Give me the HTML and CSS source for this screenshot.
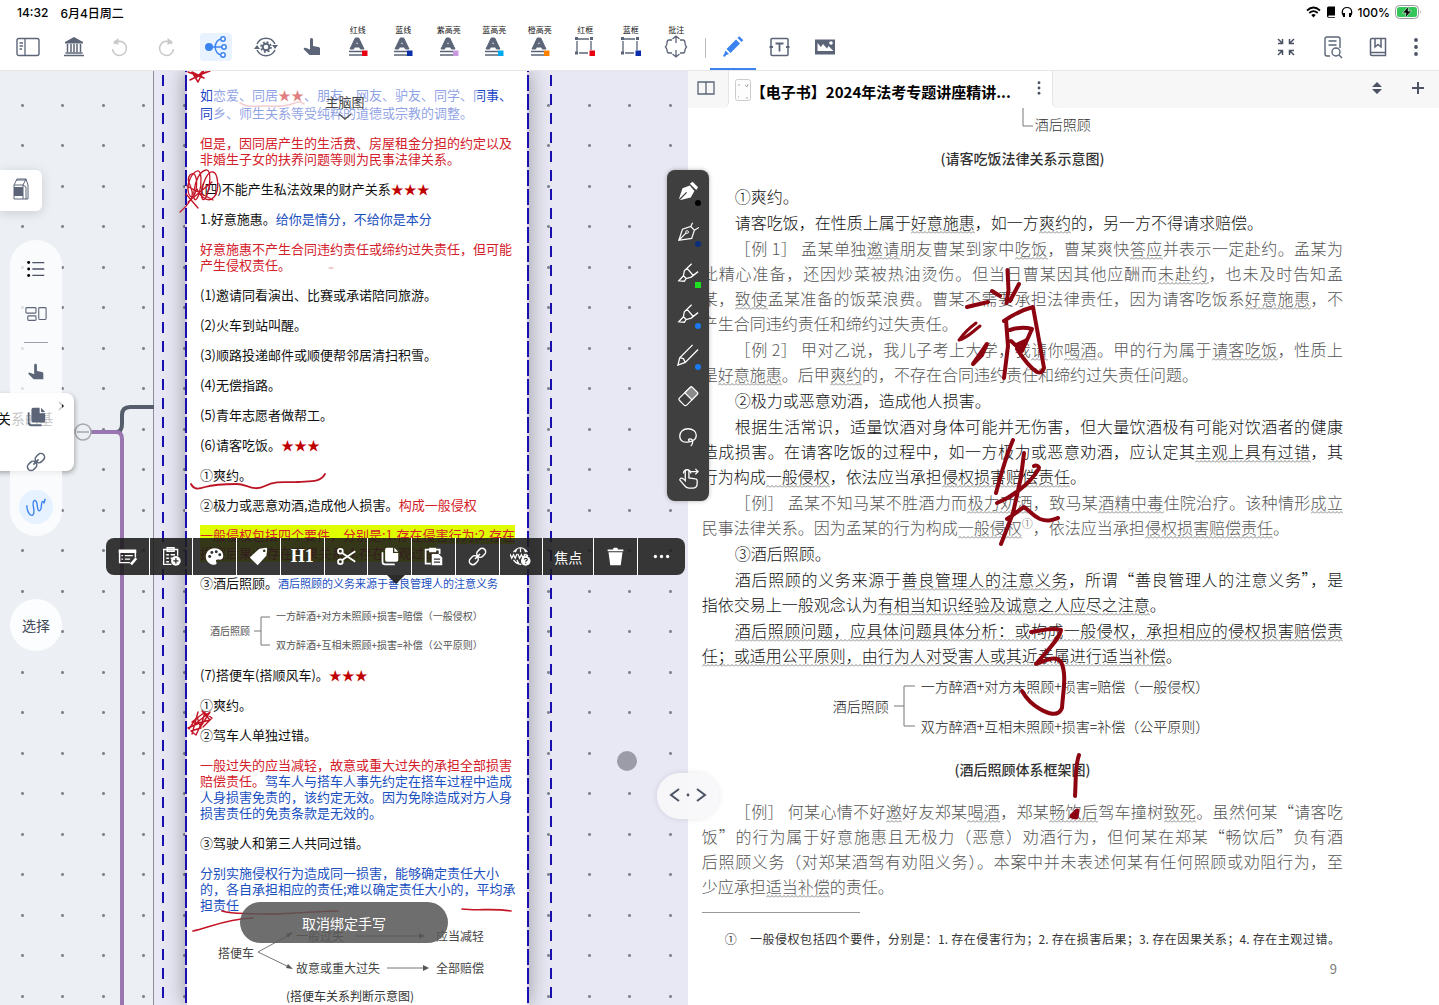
FILE: index.html
```html
<!DOCTYPE html>
<html lang="zh-CN">
  <head>
    <meta charset="UTF-8" />
    <meta name="viewport" content="width=device-width, initial-scale=1.0" />
    <title>法考专题讲座精讲</title>
    <link rel="stylesheet" href="styles.css">
  </head>
  <body>
    <!-- Shared icons -->
    <svg class="sprite" aria-hidden="true">
      <symbol id="i-mark" viewBox="0 0 24 24">
        <path d="M4 14L9.300 3h3.400L18 14h-3.600l-.8-2H8.400l-.8 2zM9.500 9.300h3L11 5.800z" fill="#5b6577" fill-rule="evenodd" stroke="#5b6577" stroke-linejoin="round" />
        <path d="M3 16.500h13M3 20h13" stroke="#5b6577" stroke-width="1.500" />
        <path d="M16 15.500h5.500V21H16z" fill="currentColor" />
      </symbol>
      <symbol id="i-frame" viewBox="0 0 24 24">
        <path d="M5 4h11M4 6v11M18 6v9M6 18h9" stroke="#5b6577" stroke-width="1.300" fill="none" />
        <path d="M2 2h3v3H2zM17 2h3v3h-3zM2 16.500h3v3H2z" fill="#5b6577" />
        <path d="M16.500 15.500H22V21h-5.500z" fill="currentColor" />
      </symbol>
      <symbol id="i-hand" viewBox="0 0 24 24">
        <path d="M10 4.500a1.500 1.500 0 0 1 3 0V11l5.500 1c1 .2 1.500 1 1.500 2v6H9.500L4 14.500c-.8-1 .2-2.300 1.500-1.700L10 14.500z" fill="#5b6577" />
      </symbol>
      <symbol id="i-link" viewBox="0 0 24 24">
        <g transform="rotate(-45 12 12)" fill="none" stroke="currentColor" stroke-width="1.700">
          <rect x="0.500" y="8" width="11" height="8" rx="4" />
          <rect x="12.500" y="8" width="11" height="8" rx="4" />
          <path d="M8 12h8" />
        </g>
      </symbol>
      <symbol id="i-copy" viewBox="0 0 24 24">
        <path d="M9 2h7v6h6v8a2 2 0 0 1-2 2H9a2 2 0 0 1-2-2V4a2 2 0 0 1 2-2zM17.500 2L22 6.500h-4.500z" fill="currentColor" />
        <path d="M4 7v11a3 3 0 0 0 3 3h11" stroke="currentColor" stroke-width="2" fill="none" />
      </symbol>
      <symbol id="i-marker" viewBox="0 0 24 24">
        <path d="M16 2L8 9.500l-1 5.500 3 3 5.500-1.500 7.500-6M11 7l7 8M7 15l-5 5.500 6 .5 2-3" fill="none" stroke="#fff" stroke-width="1.400" />
      </symbol>
      <symbol id="i-dots" viewBox="0 0 24 24">
        <circle cx="12" cy="5" r="1.900" /><circle cx="12" cy="12" r="1.900" /><circle cx="12" cy="19" r="1.900" />
      </symbol>
    </svg>

    <header>
      <div class="status">
        <span>14:32</span>
        <span>6月4日周二</span>
        <span class="battery">
          <svg width="15" height="12" viewBox="0 0 15 12"><path d="M1 4.500q6.500-6 13 0M3.300 7q4.200-3.800 8.400 0" fill="none" stroke="#000" stroke-width="1.800" /><path d="M5.300 9q2.200-2 4.400 0L7.500 11.400z" /></svg>
          <svg width="10" height="12" viewBox="0 0 10 12"><path d="M1 2q0-1.500 1.500-1.500H9v9H3q-.8 0-.8.800t.8.700h6v.8H2.500Q1 11.800 1 10z" /></svg>
          <svg width="12" height="12" viewBox="0 0 12 12"><path d="M3.500 10.500C0 8 .5 1.500 6 1.500s6 6.500 2.500 9" fill="none" stroke="#000" stroke-width="1.200" /><path d="M2 7h2v4H2zM8 7h2v4H8z" /></svg>
          <span>100%</span>
          <svg width="27" height="14" viewBox="0 0 27 14"><rect x=".5" y=".5" width="23" height="13" rx="4" fill="#fff" stroke="#999" /><rect x="2" y="2" width="20" height="10" rx="2.500" fill="#33c759" /><path d="M25 5q1.500 2 0 4z" fill="#999" /><path d="M14 1L7.500 8H11l-1 5 6.500-7H13z" stroke="#fff" stroke-width=".6" /></svg>
        </span>
      </div>

      <nav>
        <button class="tool" aria-label="侧栏"><svg viewBox="0 0 24 24"><rect x="1" y="3.500" width="22" height="17" rx="2" fill="none" stroke="#5b6577" stroke-width="1.400" /><path d="M9 3.500v17M3.500 8H7M3.500 11H7M3.500 14H6" stroke="#5b6577" stroke-width="1.300" /></svg></button>
        <button class="tool" aria-label="文献库"><svg viewBox="0 0 24 24"><path d="M12 2l9 5v1.500H3V7z" fill="#5b6577" /><path d="M5.500 9v8M9 9v8M12 9v8M15 9v8M18.500 9v8M3.500 18h17M2 20.500h20" stroke="#5b6577" stroke-width="1.500" /></svg></button>
        <button class="tool" aria-label="撤销"><svg viewBox="0 0 24 24"><path d="M6 9a7 7 0 1 1-1.500 5M9 6.500h4" fill="none" stroke="#c9c9c9" stroke-width="1.500" /><path d="M10.500 3v7L5 7z" fill="#c9c9c9" /></svg></button>
        <button class="tool" aria-label="重做"><svg viewBox="0 0 24 24"><path d="M18 9a7 7 0 1 0 1.500 5M15 6.500h-4" fill="none" stroke="#c9c9c9" stroke-width="1.500" /><path d="M13.500 3v7L19 7z" fill="#c9c9c9" /></svg></button>
        <button class="tool mind" aria-label="脑图"><svg viewBox="0 0 24 24"><circle cx="5" cy="12" r="4" fill="#3b84f0" /><path d="M8 12h10M17 4q-5 1-6 8 1 7 6 8" fill="none" stroke="#3b84f0" stroke-width="1.500" /><g fill="#fff" stroke="#3b84f0" stroke-width="1.500"><circle cx="19" cy="4" r="2.200" /><circle cx="20" cy="12" r="2.200" /><circle cx="19" cy="20" r="2.200" /></g></svg></button>
        <button class="tool" aria-label="复习"><svg viewBox="0 0 24 24"><path d="M3 9a10 10 0 0 1 18 0M3 15a10 10 0 0 0 18 0" fill="none" stroke="#5b6577" stroke-width="1.500" /><path d="M0 14l3-4 3 4zM18 10h6l-3 4z" fill="#5b6577" /><circle cx="12" cy="12" r="3.300" fill="none" stroke="#5b6577" stroke-width="2" /><circle cx="12" cy="12" r="5" fill="none" stroke="#5b6577" stroke-width="1.600" stroke-dasharray="2 1.930" /></svg></button>
        <button class="tool" aria-label="手势"><svg viewBox="0 0 24 24"><use href="#i-hand" /></svg></button>
        <div class="quick">
          <button class="tool red"><span>红线</span><svg viewBox="0 0 24 24"><use href="#i-mark" /></svg></button>
          <button class="tool navy"><span>蓝线</span><svg viewBox="0 0 24 24"><use href="#i-mark" /></svg></button>
          <button class="tool purple"><span>紫高亮</span><svg viewBox="0 0 24 24"><use href="#i-mark" /></svg></button>
          <button class="tool sky"><span>蓝高亮</span><svg viewBox="0 0 24 24"><use href="#i-mark" /></svg></button>
          <button class="tool orange"><span>橙高亮</span><svg viewBox="0 0 24 24"><use href="#i-mark" /></svg></button>
          <button class="tool red"><span>红框</span><svg viewBox="0 0 24 24"><use href="#i-frame" /></svg></button>
          <button class="tool navy"><span>蓝框</span><svg viewBox="0 0 24 24"><use href="#i-frame" /></svg></button>
          <button class="tool"><span>批注</span><svg viewBox="0 0 24 24"><path d="M8 5H5q-2 0-2 3 0 2-1.500 4Q3 14 3 15q0 3 2 3h3M16 5h3q2 0 2 3 0 2 1.500 4-1.500 2-1.500 3 0 3-2 3h-3M12 8V1M8.500 4L12 1l3.500 3M12 15v7M8.500 19l3.500 3 3.500-3" fill="none" stroke="#5b6577" stroke-width="1.300" /></svg></button>
        </div>
        <div class="divider"></div>
        <button class="tool current" aria-label="画笔"><svg viewBox="0 0 24 24"><path d="M5.500 15L15 5.500l4 4L9.500 19zM16.500 4l1.800-1.800 4 4L20.500 8zM4.500 16.500l3.500 3.500-4 1.500-1-1z" fill="#3b84f0" /><circle cx="3.500" cy="21.500" r="1.200" fill="#3b84f0" /></svg></button>
        <button class="tool" aria-label="文本框"><svg viewBox="0 0 24 24"><rect x="4" y="3.500" width="17" height="17" rx="1" fill="none" stroke="#5b6577" stroke-width="1.500" /><path d="M8.500 8.500h8M12.500 8.500v8M2.500 12H6M19 12h3.500" stroke="#5b6577" stroke-width="1.800" /></svg></button>
        <button class="tool" aria-label="图片"><svg viewBox="0 0 24 24"><path d="M2 4.500h20v15H2z" fill="#5b6577" /><path d="M4.500 16V8L8 12l2-3 4 4.500 1.500-2.500 5 5z" fill="#fff" /><circle cx="18" cy="8" r="1.800" fill="#fff" /></svg></button>
        <div class="nav-end">
          <button class="tool" aria-label="退出全屏"><svg viewBox="0 0 24 24"><path d="M4 4l4 4M20 4l-4 4M4 20l4-4M20 20l-4-4M8.500 4v4.500H4M15.500 4v4.500H20M8.500 20v-4.500H4M15.500 20v-4.500H20" fill="none" stroke="#4a5264" stroke-width="1.500" /></svg></button>
          <button class="tool" aria-label="查找"><svg viewBox="0 0 24 24"><path d="M10 21H7q-2 0-2-2V4q0-2 2-2h11q2 0 2 2v9M8.500 6h8M8.500 10h8" fill="none" stroke="#5b6577" stroke-width="1.400" /><circle cx="16" cy="17" r="4" fill="none" stroke="#5b6577" stroke-width="1.400" /><path d="M19 20l3 3" stroke="#5b6577" stroke-width="1.400" /></svg></button>
          <button class="tool" aria-label="书签"><svg viewBox="0 0 24 24"><path d="M6 3.500h13.500v17H6q-1.500 0-1.500-1.500V5q0-1.500 1.500-1.500zM4.500 17.500h15M9 4v8l3-2.500 3 2.500V4" fill="none" stroke="#5b6577" stroke-width="1.500" /></svg></button>
          <button class="tool narrow" aria-label="更多"><svg viewBox="0 0 24 24" fill="#4a5264"><use href="#i-dots" /></svg></button>
        </div>
      </nav>
    </header>

    <main>
      <!-- Mind map canvas -->
      <section class="canvas">
        <div class="dots"></div>
        <svg class="branches" viewBox="0 71 160 934" fill="none" stroke-width="4">
          <path d="M90 432h26q6 0 6-8v-9q0-8 8-8h24" stroke="#555d6b" />
          <path d="M90 432h26q6 0 6 7v580" stroke="#9a76b0" />
          <circle cx="83" cy="432" r="8" fill="#eceff3" stroke="#a5a8ad" stroke-width="1.500" />
          <path d="M77 432h12" stroke="#a5a8ad" stroke-width="1.500" />
        </svg>
        <article class="node">关系的基<svg width="8" height="10" viewBox="0 0 8 10"><path d="M2 1l4 4-4 4" fill="none" stroke="#222" stroke-width="1.500" /></svg></article>

        <div class="card">
          <div class="frame">
            <article class="sheet">
              <p class="blue">如恋爱、同居<i>★★</i>、朋友、网友、驴友、同学、同事、<br>同乡、师生关系等受纯粹的道德或宗教的调整。</p>
              <p class="hand red-ink">但是，因同居产生的生活费、房屋租金分担的约定以及<br>非婚生子女的扶养问题等则为民事法律关系。</p>
              <p>(四)不能产生私法效果的财产关系<i>★★★</i></p>
              <p>1.好意施惠。<span class="blue-ink">给你是情分，不给你是本分</span></p>
              <p class="hand red-ink">好意施惠不产生合同违约责任或缔约过失责任，但可能<br>产生侵权责任。</p>
              <p>(1)邀请同看演出、比赛或承诺陪同旅游。</p>
              <p>(2)火车到站叫醒。</p>
              <p>(3)顺路投递邮件或顺便帮邻居清扫积雪。</p>
              <p>(4)无偿指路。</p>
              <p>(5)青年志愿者做帮工。</p>
              <p>(6)请客吃饭。<i>★★★</i></p>
              <p>①爽约。</p>
              <p>②极力或恶意劝酒,造成他人损害。<span class="red-ink">构成一般侵权</span></p>
              <p class="red-ink"><mark>一般侵权包括四个要件，分别是:1.存在侵害行为;2.存在</mark><br><mark>损害后果;3.存在因果关系;4.存在主观过错</mark></p>
              <p>③酒后照顾。<span class="blue-ink small">酒后照顾的义务来源于善良管理人的注意义务</span></p>
              <div class="tree">
                <span>酒后照顾</span>
                <svg width="18" height="32" viewBox="0 0 18 32"><path d="M0 16h7M16 2H7v28h9" fill="none" stroke="#777" /></svg>
                <div><span>一方醉酒+对方未照顾+损害=赔偿（一般侵权）</span><span>双方醉酒+互相未照顾+损害=补偿（公平原则）</span></div>
              </div>
              <p>(7)搭便车(搭顺风车)。<i>★★★</i></p>
              <p>①爽约。</p>
              <p>②驾车人单独过错。</p>
              <p class="hand blue-ink"><span class="red-ink">一般过失的应当减轻，故意或重大过失的承担全部损害<br>赔偿责任。</span>驾车人与搭车人事先约定在搭车过程中造成<br>人身损害免责的，该约定无效。因为免除造成对方人身<br>损害责任的免责条款是无效的。</p>
              <p>③驾驶人和第三人共同过错。</p>
              <p class="hand blue-ink">分别实施侵权行为造成同一损害，能够确定责任大小<br>的，各自承担相应的责任;难以确定责任大小的，平均承<br>担责任</p>
              <div class="flow">
                <span>搭便车</span>
                <svg width="36" height="44" viewBox="0 0 36 44"><path d="M34 4L1 22l33 16" fill="none" stroke="#777" /><path d="M36 2l-7 2 2 4zM36 39l-5-5-2 4z" fill="#555" /></svg>
                <div>
                  <p><span>一般过失</span><svg viewBox="0 0 70 6" width="70" height="6"><path d="M0 3h66" stroke="#777" /><path d="M64 0l6 3-6 3z" fill="#555" /></svg><span>应当减轻</span></p>
                  <p><span>故意或重大过失</span><svg viewBox="0 0 42 6" width="42" height="6"><path d="M0 3h38" stroke="#777" /><path d="M36 0l6 3-6 3z" fill="#555" /></svg><span>全部赔偿</span></p>
                </div>
              </div>
              <p class="figure">(搭便车关系判断示意图)</p>
            </article>
          </div>
        </div>

        <!-- Pen strokes on the sheet -->
        <svg class="ink" viewBox="0 71 688 934" fill="none" stroke="#c41425" stroke-linecap="round" stroke-linejoin="round">
          <path d="M188 72l16 6-12-6 6 10 6-12-8 8M190 80l16-8M202 74l8-3" stroke-width="1.500" />
          <path d="M240 103c8 5 14 3 22 3s18 1 26-1 12-5 16-1" stroke="#e39aa2" stroke-width="1.500" />
          <path d="M180 212c8-7 14-14 12-21-2-8-6-11-2-16 5-5 8 4 6 15-2 10-7 8-8 0s4-17 9-19 5 14 2 23-6 7-5-3 6-20 12-21 4 17 1 25-7 5-5-5 6-19 11-18 7 18 1 25-14-1-17-8M186 194l12 14M187 186l26 14M188 202l24-20" stroke-width="1.300" />
          <path d="M191 484c3 6 8 5 14 3 10-3 22-3 32-3s16 8 28 2 22-3 33-4 22 1 27-8" stroke="#bc1626" stroke-width="1.800" />
          <path d="M329 268h4" stroke="#e39aa2" stroke-width="1" />
          <path d="M189 729l8-12 4 11-10 3 5 4 6-13-14 6M192 722l13-10-4 14 9-14-15 12 15-4-8-9 10 7-9 9M192 734l6-22" stroke-width="1.400" />
          <path d="M462 909c16 2 32-1 49 2M193 931c15-3 32-12 60-13M222 911c10 3 20 2 38 3s40-2 78-3" stroke-width="1.600" />
        </svg>

        <div class="map-title">主脑图<svg width="14" height="8" viewBox="0 0 14 8"><path d="M1 1l6 5 6-5" fill="none" stroke="#555" stroke-width="1.500" /></svg></div>

        <button class="box" aria-label="卡片盒"><svg width="20" height="24" viewBox="0 0 20 24"><path d="M3 8l3-6h9l2 6v14H3zM3 8h9v14M12 8l3-6M12 8l3 2v12M5 3h10" fill="none" stroke="#5b6577" /><path d="M3 10h9v9H3z" fill="#5b6577" /></svg></button>
        <div class="pill">
          <button aria-label="大纲"><svg viewBox="0 0 24 24"><path d="M8 5h13M8 12h13M8 19h13" stroke="#4a5264" stroke-width="1.500" /><circle cx="4" cy="5" r="1.600" /><circle cx="4" cy="12" r="1.600" /><circle cx="4" cy="19" r="1.600" /></svg></button>
          <button aria-label="布局"><svg viewBox="0 0 24 24"><g fill="none" stroke="#5b6577" stroke-width="1.200"><rect x="1" y="5" width="11" height="6" rx="1" /><rect x="3" y="14" width="9" height="5" rx="1" /><rect x="15" y="5" width="8" height="13" rx="1" /></g></svg></button>
          <hr>
          <button aria-label="手势"><svg viewBox="0 0 24 24"><use href="#i-hand" /></svg></button>
          <button aria-label="复制"><svg viewBox="0 0 24 24"><use href="#i-copy" /></svg></button>
          <button aria-label="链接"><svg viewBox="0 0 24 24"><use href="#i-link" /></svg></button>
          <button class="on" aria-label="手写"><svg viewBox="0 0 24 24"><path d="M2 10c0 6 3 12 6 11 5-2-2-14 2-16 5-1 2 12 6 11 3-1 1-9 3-10s1 3 2 1l1-4" fill="none" stroke="#3b84f0" stroke-width="1.500" /></svg></button>
        </div>
        <button class="select">选择</button>

        <div class="context">
          <button aria-label="编辑"><svg viewBox="0 0 24 24"><path d="M2 4h20v4H2z" fill="#fff" /><path d="M15 19H3V6h18v7M5 11h2M5 15h2M9 11h9M9 15h6" fill="none" stroke="#fff" stroke-width="1.700" /><path d="M16 21l6-7" stroke="#fff" stroke-width="3" /></svg></button>
          <button aria-label="加入复习"><svg viewBox="0 0 24 24"><path d="M12 21H3V4h16v7M7 2h8v4H7zM6 10h3M11 10h5M6 14h3M6 18h3M11 14h2" fill="none" stroke="#fff" stroke-width="1.500" /><circle cx="17" cy="17" r="5.500" fill="#fff" /><path d="M17 14v6M14 17h6" stroke="#333" stroke-width="1.500" /></svg></button>
          <button aria-label="颜色"><svg viewBox="0 0 24 24"><path d="M12 2.500c6 0 10 4 10 8.500 0 4-3 5-5 4.500-2.500-.5-4 .5-3 2.500s0 3.500-2 3.500C6 21.500 2 17 2 12s4-9.500 10-9.500z" fill="#fff" /><g fill="#333"><circle cx="6.500" cy="12" r="1.700" /><circle cx="9" cy="7.500" r="1.700" /><circle cx="14" cy="6.500" r="1.700" /><circle cx="18" cy="10" r="1.700" /></g></svg></button>
          <button aria-label="标签"><svg viewBox="0 0 24 24"><path d="M13 3l8-1 1 1-1 8-10 11-9-9zM18.500 4a1.500 1.500 0 1 0 .1 0z" fill="#fff" fill-rule="evenodd" /></svg></button>
          <button class="h1">H1</button>
          <button aria-label="剪切"><svg viewBox="0 0 24 24"><g fill="none" stroke="#fff" stroke-width="2"><circle cx="5" cy="6" r="2.700" /><circle cx="5" cy="18" r="2.700" /><path d="M7 8l15 10M7 16L22 6" /></g></svg></button>
          <button aria-label="复制"><svg viewBox="0 0 24 24"><use href="#i-copy" /></svg></button>
          <button aria-label="粘贴"><svg viewBox="0 0 24 24"><path d="M9 20H3V4h16v5" fill="none" stroke="#fff" stroke-width="2" /><path d="M7 2h8v5H7zM10 9h8l4 4v9H10z" fill="#fff" /><path d="M12.500 15h7M12.500 18.500h7" stroke="#333" stroke-width="1.300" /></svg></button>
          <button aria-label="链接"><svg viewBox="0 0 24 24"><use href="#i-link" /></svg></button>
          <button aria-label="搜索网页"><svg viewBox="0 0 24 24"><path d="M4 7q8-10 16 0M4 16q4 5 9 5M12 2v5M8 3L6 7M16 3l2 4M8 16l2 4" fill="none" stroke="#fff" stroke-width="1.400" /><path d="M0 9l2 5 2-4 2 4 2-5M9 9l2 5 2-4 2 4 2-5M18 9l1 3 1.500-2" fill="none" stroke="#fff" stroke-width="1.500" /><circle cx="18" cy="17" r="5.500" fill="#fff" /><path d="M16.300 15.500c.2-2 3.600-1.800 3.400 0-.1 1-1.700 1.200-1.700 2.500M18 19.200v1.200" fill="none" stroke="#333" stroke-width="1.300" /></svg></button>
          <button class="focus">焦点</button>
          <button aria-label="删除"><svg viewBox="0 0 24 24"><path d="M3 4h6l1-2h4l1 2h6v2H3zM4 7h16l-2 15H6z" fill="#fff" /></svg></button>
          <button aria-label="更多"><svg class="flat" viewBox="0 0 24 24" fill="#fff"><use href="#i-dots" /></svg></button>
        </div>

        <div class="touch"></div>
        <button class="toast">取消绑定手写</button>
      </section>

      <!-- Book -->
      <section class="book">
        <div class="tabs">
          <button class="split" aria-label="分栏"><svg width="18" height="16" viewBox="0 0 18 16"><path d="M1 2h16v12H1zM9 2v12" fill="none" stroke="#5b6577" stroke-width="1.300" /></svg></button>
          <div class="tab">
            <svg width="16" height="22" viewBox="0 0 16 22"><rect x=".5" y=".5" width="15" height="21" rx="2" fill="#fdfdfd" stroke="#ccc" /><path d="M3 6h2M10 6l2 2 1-3M3 18h1M11 19h2" stroke="#aaa" fill="none" /></svg>
            <h1>【电子书】2024年法考专题讲座精讲...</h1>
            <button aria-label="标签菜单"><svg width="18" height="18" viewBox="0 0 24 24" fill="#4a5264"><use href="#i-dots" /></svg></button>
          </div>
          <div class="tabs-rest">
            <button aria-label="切换"><svg width="12" height="14" viewBox="0 0 12 14"><path d="M1 6l5-5 5 5zM1 8h10l-5 5z" fill="#4a5264" /></svg></button>
            <button aria-label="新建"><svg width="14" height="14" viewBox="0 0 14 14"><path d="M7 1v12M1 7h12" stroke="#4a5264" stroke-width="2" /></svg></button>
          </div>
        </div>

        <article class="page">
          <div class="branch-end"><svg width="12" height="22" viewBox="0 0 12 22"><path d="M1 0v18h10" fill="none" stroke="#777" /></svg>酒后照顾</div>
          <p class="caption">(请客吃饭法律关系示意图)</p>

          <div class="text">
            <p><span class="first end">①爽约。</span></p>
            <p><span class="first end">请客吃饭，在性质上属于<u>好意施惠</u>，如一方<u>爽约</u>的，另一方不得请求赔偿。</span></p>
            <p class="case"><span class="first">［例 1］ 孟某单独<u>邀请</u>朋友曹某到家中<u>吃饭</u>，曹某爽快<u>答应</u>并表示一定赴约。孟某为</span><span>此精心准备，还因炒菜被热油烫伤。但当日曹某因其他应酬而<u>未赴约</u>，也未及时告知孟</span><span>某，<u>致使</u>孟某准备的饭菜浪费。曹某不需要承担法律责任，因为请客吃饭系<u>好意施惠</u>，不</span><span class="end">产生合同违约责任和缔约过失责任。</span></p>
            <p class="case"><span class="first">［例 2］ 甲对乙说，我儿子考上大学，我<u>请</u>你<u>喝酒</u>。甲的行为属于<u>请客吃饭</u>，性质上</span><span class="end">是<u>好意施惠</u>。后甲<u>爽约</u>的，不存在合同违约责任和缔约过失责任问题。</span></p>
            <p><span class="first end">②极力或恶意劝酒，造成他人损害。</span></p>
            <p><span class="first">根据生活常识，适量饮酒对身体可能并无伤害，但大量饮酒极有可能对饮酒者的健康</span><span>造成损害。在请客吃饭的过程中，如一方极力或恶意劝酒，应认定其<u>主观上具有过错</u>，其</span><span class="end">行为构成<u>一般侵权</u>，依法应当承担<u>侵权损害赔偿责任</u>。</span></p>
            <p class="case"><span class="first">［例］ 孟某不知马某不胜酒力而<u>极力劝酒</u>，致马某<u>酒精中毒</u>住院治疗。该种情形<u>成立</u></span><span class="end">民事法律关系。因为孟某的行为构成<u>一般侵权</u><sup>①</sup>，依法应当承担<u>侵权损害赔偿责任</u>。</span></p>
            <p><span class="first end">③酒后照顾。</span></p>
            <p><span class="first">酒后照顾的义务来源于<u>善良管理人的注意义务</u>，所谓“善良管理人的注意义务”，是</span><span class="end">指依交易上一般观念认为<u>有相当知识经验及诚意之人应尽之注意</u>。</span></p>
            <p><span class="first"><u>酒后照顾问题，应具体问题具体分析：或构成一般侵权，承担相应的侵权损害赔偿责</u></span><span class="end"><u>任；或适用公平原则，由行为人对受害人或其近亲属进行适当补偿</u>。</span></p>
          </div>

          <div class="tree big">
            <span>酒后照顾</span>
            <svg width="22" height="44" viewBox="0 0 22 44"><path d="M0 22h10M21 2H10v40h11" fill="none" stroke="#777" /></svg>
            <div><span>一方醉酒+对方未照顾+损害=赔偿（一般侵权）</span><span>双方醉酒+互相未照顾+损害=补偿（公平原则）</span></div>
          </div>
          <p class="caption">(酒后照顾体系框架图)</p>

          <div class="text last">
            <p class="case"><span class="first">［例］ 何某心情不好<u>邀</u>好友郑某<u>喝酒</u>，郑某<u>畅饮后</u>驾车撞树<u>致死</u>。虽然何某“请客吃</span><span>饭”的行为属于好意施惠且无极力（恶意）劝酒行为，但何某在郑某“畅饮后”负有酒</span><span>后照顾义务（对郑某酒驾有劝阻义务）。本案中并未表述何某有任何照顾或劝阻行为，至</span><span class="end">少应承担<u>适当补偿</u>的责任。</span></p>
          </div>
          <footer>
            <p>①　一般侵权包括四个要件，分别是：1. 存在侵害行为；2. 存在损害后果；3. 存在因果关系；4. 存在主观过错。</p>
            <span>9</span>
          </footer>
        </article>

        <!-- Pen strokes on the book page -->
        <svg class="ink" viewBox="688 71 751 934" fill="none" stroke="#8c0410" stroke-width="4" stroke-linecap="round" stroke-linejoin="round">
          <path d="M967 307l21-5M992 291l8 5M1007.500 270l1 20-2 13M1019 284l-9 17" />
          <path d="M976 323c-8 6-12 10-17 17 8-2 12-7 21-14" stroke-width="3" />
          <path d="M987 344l-14 20 9-9z" />
          <path d="M1004 321q14-10 29-14l4 22 7 39q-2 6-7 4-9-6-20-23M1006 320l2 26-4 32M1010 330q12-4 22-1l-10 22-11-10" />
          <path d="M1027 339l-6 11-7-5z" fill="#8c0410" stroke-width="2" />
          <path d="M1013 440c-6 14-12 34-17 53M997 503c14-6 32-18 41-33 3-4-2-5-4-4M1024 453l-3 24-8 36-12 31M1010 497l9-7M1007 519c8-5 12-9 17-12 6 4 9 9 16 12 8 3 12 1 18-1" />
          <path d="M1031 632c10-1 20-5 30-2-2 10-16 23-25 34 10-4 20-9 25-2 6 12 2 30 1 46-4 10-15 5-22 1-9-5-14-11-18-18" />
          <path d="M1079 755c-4 10-3 26-4 41" />
          <path d="M1077 811l-5 5 4 1z" stroke-width="5" />
        </svg>

        <div class="pens">
          <button aria-label="钢笔"><svg viewBox="0 0 24 24"><path d="M2 21L6 9l8-3 5 6-4 7-12 3 8-8-1-1zM14 4l3-2 6 6-2 3z" fill="#fff" /></svg><b class="black"></b></button>
          <button aria-label="细钢笔"><svg viewBox="0 0 24 24"><path d="M2 21L6 9l9-3 4 4-3 9zM2 21l8-8M15 6l2-4M19 10l5-3" fill="none" stroke="#fff" stroke-width="1.300" /><circle cx="11" cy="12" r="1.500" fill="none" stroke="#fff" /></svg><b class="navy"></b></button>
          <button aria-label="荧光笔"><svg viewBox="0 0 24 24"><use href="#i-marker" /></svg><b class="green"></b></button>
          <button aria-label="荧光笔二"><svg viewBox="0 0 24 24"><use href="#i-marker" /></svg><b></b></button>
          <button aria-label="铅笔"><svg viewBox="0 0 24 24"><path d="M17 1L3 15 1 23l8-3L23 6M3 15l4 1 2 4" fill="none" stroke="#fff" stroke-width="1.400" /></svg><b></b></button>
          <button aria-label="橡皮"><svg viewBox="0 0 24 24"><g transform="rotate(-45 12 12)" stroke="#fff" stroke-width="1.300"><rect x="2" y="7" width="20" height="11" rx="2" fill="none" /><path d="M12 7h8q2 0 2 2v7q0 2-2 2h-8z" fill="#8b8b8b" /></g></svg></button>
          <button aria-label="套索"><svg viewBox="0 0 24 24"><path d="M14 17c-7 2-11-1-11-6s4-8 9-8 9 3 9 7-3 6-6 7c-3 0-3-3-1-3 4 0 4 5 1 8" fill="none" stroke="#fff" stroke-width="1.400" /></svg></button>
          <button aria-label="手势"><svg viewBox="0 0 24 24"><path d="M9 15V5q0-2 2-2t2 2v7l7 1q2 0 2 2v3q0 5-5 5h-4q-3 0-5-3l-5-6q1-3 4-1zM7 7a4 4 0 1 1 8 0M15 5h8M20 2l3 3-3 3" fill="none" stroke="#fff" stroke-width="1.400" /></svg></button>
        </div>
        <button class="handle" aria-label="调整分栏"><svg width="40" height="16" viewBox="0 0 40 16"><path d="M11 2L3 8l8 6M29 2l8 6-8 6" fill="none" stroke="#4a5264" stroke-width="2" /><circle cx="20" cy="8" r="1.400" fill="#4a5264" /></svg></button>
      </section>
    </main>
  </body>
</html>
```

FILE: styles.css
```css
* {
  margin: 0;
  padding: 0;
  box-sizing: border-box;
}

body {
  height: 100vh;
  display: flex;
  flex-direction: column;
  overflow: hidden;
  background-color: white;
  font-family: Inter, 'Noto Sans CJK SC', sans-serif;
  color: #111;
}

button {
  border: none;
  background-color: transparent;
  font-family: inherit;
  color: inherit;
}

i {
  font-style: normal;
  color: #c00000;
}

.sprite {
  position: absolute;
  width: 0;
  height: 0;
}

/* Status bar and toolbar */
header {
  border-bottom: 1px solid #e6e6e6;
}

.status {
  height: 24px;
  padding: 0 17px;
  display: flex;
  align-items: center;
  gap: 12px;
  font-size: 12px;
  font-weight: 500;
  color: black;
}

.battery {
  margin-left: auto;
  display: flex;
  align-items: center;
  gap: 5px;
}

nav {
  height: 46px;
  padding: 0 8px 0 5px;
  display: flex;
}

.tool {
  width: 46px;
  height: 46px;
  flex: none;
  display: flex;
  flex-direction: column;
  align-items: center;
  justify-content: center;
}
.tool svg {
  width: 24px;
  height: 24px;
}
.tool span {
  height: 10px;
  line-height: 10px;
  margin-top: -10px;
  font-size: 8px;
  color: #111;
  white-space: nowrap;
}
.tool.mind {
  width: 54px;
}
.mind svg {
  box-sizing: content-box;
  padding: 2px 4px;
  border-radius: 4px;
  background-color: #e8f3ff;
}
.tool.narrow {
  width: 30px;
}
.tool.current {
  border-bottom: 2px solid #3b84f0;
}

.quick {
  width: 364px;
  display: flex;
}
.quick .tool {
  flex: 1;
  width: auto;
}

.red {
  color: #e60012;
}
.navy {
  color: #0a2fa8;
}
.purple {
  color: #c79ae0;
}
.sky {
  color: #00aaf0;
}
.orange {
  color: #ff8000;
}

.divider {
  width: 1px;
  height: 20px;
  margin: 14px 4px 0 6px;
  background-color: #bbb;
}

.nav-end {
  margin-left: auto;
  display: flex;
}

main {
  flex: 1;
  min-height: 0;
  display: flex;
}

/* Mind map */
.canvas {
  position: relative;
  flex: 0 0 47.8%;
  overflow: hidden;
  background-color: #eceff3;
}

.dots {
  position: absolute;
  inset: 0;
  z-index: 1;
  background-image: radial-gradient(#7f858e 1px, transparent 2px),
    radial-gradient(#7f858e 1px, transparent 2px),
    radial-gradient(#7f858e 1px, transparent 2px),
    radial-gradient(#7f858e 1px, transparent 2px);
  background-size: 81px 81px;
  background-position: -18px -6px, 22px -6px, -18px 34px, 22px 34px;
}

.branches {
  position: absolute;
  left: 0;
  top: 0;
  z-index: 1;
  width: 160px;
  height: 934px;
}

.node {
  position: absolute;
  left: -14px;
  top: 322px;
  z-index: 2;
  width: 88px;
  height: 78px;
  padding: 16px 0 0 11px;
  border-radius: 8px;
  background-color: white;
  box-shadow: 1px 2px 5px #0000004d;
  font-size: 14px;
  line-height: 20px;
}
.node svg {
  position: absolute;
  right: 9px;
  top: 8px;
}

.card {
  position: absolute;
  left: 153px;
  right: 0;
  top: 0;
  bottom: 0;
  padding-left: 8px;
  border-left: 1px solid #8d8f98;
  background-color: #e8e8f4;
}

/* Dashed lines down both sides */
.frame,
.sheet {
  background-repeat: repeat-y;
  background-size: 2px 19px;
  background-position: left 4px, right 4px;
}
.frame {
  width: 390px;
  height: 100%;
  padding: 0 23px;
  background-image: linear-gradient(#1a10b0 11px, transparent 11px),
    linear-gradient(#1a10b0 11px, transparent 11px);
}
.sheet {
  position: relative;
  z-index: 1;
  height: 100%;
  padding: 15px 0 0 15px;
  background-color: white;
  background-image: linear-gradient(#1a10b0 16px, #ddd0f5 16px),
    linear-gradient(#1a10b0 16px, #ddd0f5 16px);
  box-shadow: 0 0 20px #00000059;
  font-family: 'Noto Sans CJK SC', sans-serif;
  overflow: hidden;
}
.sheet p {
  margin-bottom: 12px;
  font-size: 13px;
  line-height: 18px;
  white-space: nowrap;
}
.sheet .hand {
  padding: 1px 0;
  line-height: 16px;
}
.blue {
  color: #1c46c8;
}
.sheet .red-ink {
  color: #d3202a;
}
.blue-ink {
  color: #1b50c0;
}
.small {
  font-size: 11px;
}
mark {
  background-color: #dfff00;
  color: inherit;
}

.tree {
  display: flex;
  align-items: center;
  gap: 4px;
  margin: 0 0 12px 10px;
  padding: 4px 0 1px;
  font-size: 10px;
  color: #555;
  white-space: nowrap;
}
.tree div {
  display: flex;
  flex-direction: column;
  gap: 13px;
  line-height: 16px;
}

.flow {
  display: flex;
  align-items: center;
  gap: 3px;
  margin-left: 18px;
  padding-top: 1px;
  font-size: 12px;
  color: #444;
}
.flow div {
  width: 188px;
}
.flow p {
  display: flex;
  align-items: center;
  justify-content: space-between;
  margin-bottom: 14px;
  font-size: 12px;
}
.flow p:last-child {
  margin-bottom: 0;
}
.sheet .figure {
  margin-top: 10px;
  padding-left: 86px;
  font-size: 12px;
  color: #333;
}

.ink {
  position: absolute;
  left: 0;
  top: 0;
  z-index: 2;
  width: 688px;
  height: 934px;
  pointer-events: none;
}
.book .ink {
  width: 751px;
}

.map-title {
  position: absolute;
  left: 212px;
  top: 0;
  z-index: 3;
  width: 266px;
  height: 60px;
  padding-top: 20px;
  display: flex;
  flex-direction: column;
  align-items: center;
  background-color: #ffffff80;
  font-size: 13px;
  line-height: 22px;
  color: #444;
}

.box,
.pill,
.select,
.context,
.touch,
.toast {
  position: absolute;
  z-index: 4;
}
.box {
  left: 0;
  top: 99px;
  width: 42px;
  height: 41px;
  border-radius: 0 6px 6px 0;
  background-color: white;
  box-shadow: 0 2px 12px #00000026;
}

.pill {
  left: 10px;
  top: 169px;
  width: 52px;
  padding: 6px 0;
  display: flex;
  flex-direction: column;
  align-items: center;
  border-radius: 26px;
  background-color: #ffffffbf;
  color: #5b6577;
}
.pill button {
  width: 34px;
  height: 45px;
}
.pill svg {
  width: 22px;
  height: 22px;
  vertical-align: middle;
}
.pill hr {
  width: 24px;
  margin: 6px 0;
  border: none;
  border-top: 1px solid #9aa0aa;
}
.pill .on {
  height: 34px;
  margin: 6px 0;
  border-radius: 50%;
  background-color: #e6f2ff;
}

.select {
  left: 10px;
  top: 528px;
  width: 52px;
  height: 52px;
  border-radius: 50%;
  background-color: #ffffffd9;
  font-size: 14px;
  color: #444c5c;
}

.context {
  left: 106px;
  top: 467px;
  width: 579px;
  height: 37px;
  display: flex;
  color: white;
}
.context::after {
  content: '';
  position: absolute;
  left: 281px;
  top: 37px;
  border: 9px solid transparent;
  border-top-color: #2b2b2b;
  border-bottom: none;
}
.context button {
  flex: 1;
  display: flex;
  align-items: center;
  justify-content: center;
  background-color: #1c1c1ce0;
  border-right: 1px solid white;
}
.context button:first-child {
  border-radius: 8px 0 0 8px;
}
.context button:last-child {
  flex: 0 0 47px;
  border-radius: 0 8px 8px 0;
  border-right: none;
}
.context svg {
  width: 21px;
  height: 21px;
}
.context .flat {
  transform: rotate(90deg);
}
.context .h1 {
  font-family: 'Liberation Serif', serif;
  font-size: 18px;
  font-weight: bold;
}
.context .focus {
  flex: 0 0 51px;
  font-size: 14px;
}

.touch {
  left: 617px;
  top: 680px;
  width: 20px;
  height: 20px;
  border-radius: 50%;
  background-color: #9c9ca8;
}

.toast {
  left: 240px;
  top: 831px;
  width: 208px;
  height: 41px;
  border-radius: 21px;
  background-color: #585858dd;
  font-size: 14px;
  color: white;
}

/* Book */
.book {
  position: relative;
  flex: 1;
  min-width: 0;
}

.tabs {
  height: 37px;
  display: flex;
  background-color: white;
}
.split {
  width: 41px;
  padding-right: 4px;
  border-right: 1px solid #e4e4e4;
  border-radius: 0 0 6px 0;
  background-color: #f7f7f7;
}
.tab {
  width: 323px;
  padding: 0 4px 0 6px;
  display: flex;
  align-items: center;
  white-space: nowrap;
}
.tab h1 {
  flex: 1;
  padding-top: 4px;
  font-family: 'Noto Sans CJK SC', sans-serif;
  font-size: 15px;
  font-weight: 600;
  color: black;
}
.tab button {
  width: 18px;
}
.tabs-rest {
  flex: 1;
  padding-right: 14px;
  display: flex;
  justify-content: flex-end;
  gap: 28px;
  border-left: 1px solid #e4e4e4;
  border-radius: 0 0 0 6px;
  background-color: #f7f7f7;
}

.page {
  padding: 0 96px 0 14px;
  color: #333;
  font-family: 'Noto Sans CJK SC', sans-serif;
}
.branch-end {
  height: 34px;
  padding-left: 320px;
  display: flex;
  gap: 1px;
  font-size: 14px;
  font-weight: 300;
  line-height: 32px;
}
.caption {
  font-size: 14px;
  font-weight: 500;
  line-height: 32px;
  text-align: center;
}

.text {
  margin-top: 10px;
  font-size: 16px;
  font-weight: 300;
  color: #111;
}
.text p {
  margin-bottom: 1px;
}
.text p span {
  display: block;
  line-height: 25px;
  text-align-last: justify;
  white-space: nowrap;
}
.text .first {
  padding-left: 33px;
}
.text p .end {
  text-align-last: left;
}
.text .case {
  color: #555;
}
/* fine zigzag under the key words */
.text u {
  text-decoration: none;
  background: url("data:image/svg+xml,%3Csvg xmlns='http://www.w3.org/2000/svg' width='4' height='3'%3E%3Cpath d='M0 2.500L2 .5l2 2' fill='none' stroke='%23666' stroke-width='.8'/%3E%3C/svg%3E") repeat-x left bottom;
}
.text sup {
  font-size: 11px;
  line-height: 11px;
}

.tree.big {
  margin: 0 0 0 131px;
  padding: 7px 0;
  gap: 5px;
  font-size: 14px;
  font-weight: 300;
  color: #222;
}
.big div {
  gap: 20px;
  line-height: 20px;
}
.big + .caption {
  margin-top: 10px;
}

.text.last {
  margin-top: 14px;
}

footer {
  margin-top: 13px;
  font-size: 12px;
}
footer::before {
  content: '';
  display: block;
  width: 158px;
  border-top: 1px solid #999;
}
footer p {
  padding: 16px 3px 0 23px;
  line-height: 20px;
  text-align-last: justify;
  white-space: nowrap;
}
footer span {
  display: block;
  padding: 10px 6px 0 0;
  font-size: 13px;
  text-align: right;
  color: #777;
}

.pens {
  position: absolute;
  left: -21px;
  top: 99px;
  z-index: 5;
  width: 42px;
  padding: 2px 0 1px;
  border-radius: 8px;
  background-color: #3f3f3f;
  box-shadow: 0 0 4px #0000004d;
}
.pens button {
  position: relative;
  display: block;
  width: 42px;
  height: 41px;
}
.pens svg {
  width: 22px;
  height: 22px;
}
.pens b {
  position: absolute;
  right: 8px;
  bottom: 7px;
  width: 6px;
  height: 6px;
  border-radius: 50%;
  background-color: #1a7af0;
}
.pens .black {
  background-color: black;
}
.pens .navy {
  background-color: #0b2f7c;
}
.pens .green {
  border-radius: 0;
  background-color: #1ee01e;
}

.handle {
  position: absolute;
  left: -31px;
  top: 702px;
  z-index: 5;
  width: 62px;
  height: 46px;
  border-radius: 23px;
  background-color: #f8f8faed;
  box-shadow: 0 0 6px #0000001a;
}
```
